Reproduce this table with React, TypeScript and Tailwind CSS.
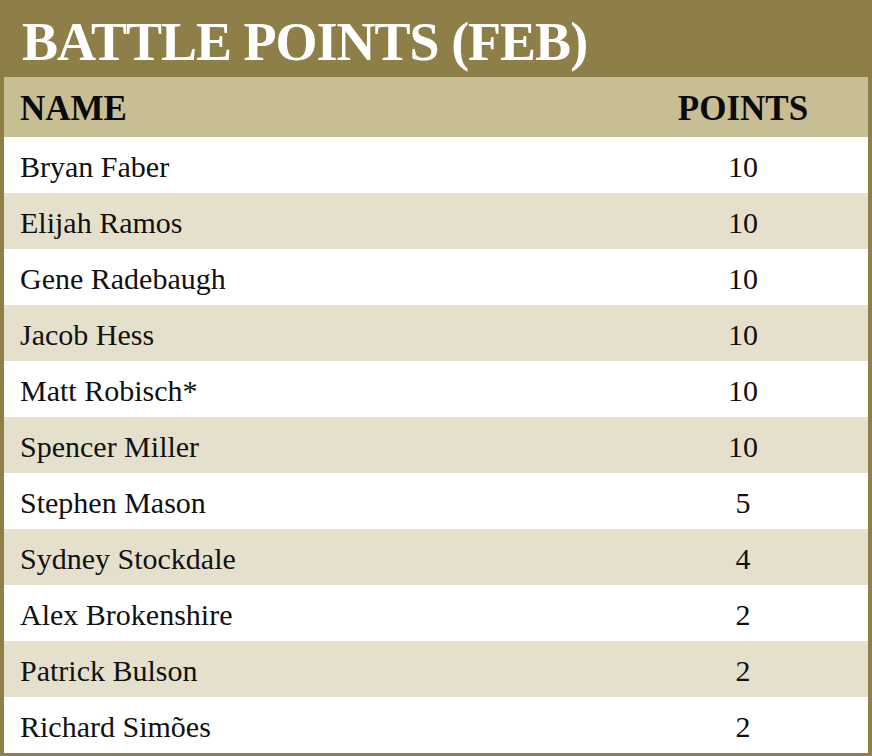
import React from "react";

const rows: [string, string][] = [
  ["Bryan Faber", "10"],
  ["Elijah Ramos", "10"],
  ["Gene Radebaugh", "10"],
  ["Jacob Hess", "10"],
  ["Matt Robisch*", "10"],
  ["Spencer Miller", "10"],
  ["Stephen Mason", "5"],
  ["Sydney Stockdale", "4"],
  ["Alex Brokenshire", "2"],
  ["Patrick Bulson", "2"],
  ["Richard Simões", "2"],
];

export default function App() {
  return (
    <div
      className="w-[872px] h-[756px] bg-[#8e7f48] px-[4px] pb-[3px] flex flex-col"
      style={{ fontFamily: '"Liberation Serif", "Times New Roman", serif' }}
    >
      <div className="h-[77px] flex items-center pl-[18px] pt-[6px]">
        <span className="text-white font-bold text-[54px] leading-none tracking-[-1px]">
          BATTLE POINTS (FEB)
        </span>
      </div>
      <div className="h-[60px] bg-[#c7be94] flex items-center pt-[2px] text-[#0a0a0a] font-bold text-[35px] leading-none">
        <div className="flex-1 pl-[16px]">NAME</div>
        <div className="w-[250px] text-center">POINTS</div>
      </div>
      {rows.map(([name, pts], i) => (
        <div
          key={name}
          className={
            "h-[56px] flex items-center pt-[3px] text-[30px] leading-none text-[#111111] " +
            (i % 2 === 0 ? "bg-white" : "bg-[#e5e0cc]")
          }
        >
          <div className="flex-1 pl-[16px]">{name}</div>
          <div className="w-[250px] text-center">{pts}</div>
        </div>
      ))}
    </div>
  );
}
